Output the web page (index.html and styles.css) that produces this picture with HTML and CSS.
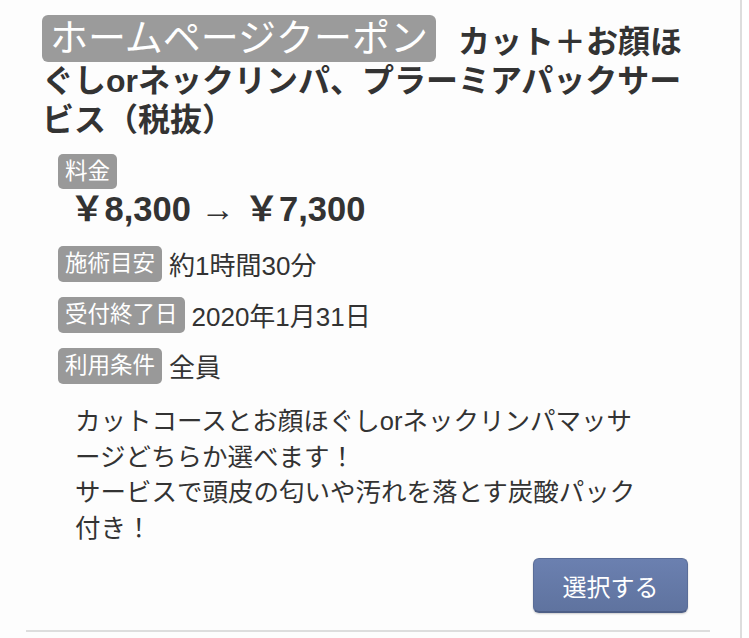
FILE: index.html
```html
<!DOCTYPE html>
<html lang="ja">
  <head>
    <meta charset="UTF-8" />
    <meta name="viewport" content="width=device-width, initial-scale=1.0" />
    <title>クーポン</title>
    <link rel="stylesheet" href="styles.css">
  </head>
  <body>
    <div id="page">
      <div class="coupon">
        <h2 class="coupon-title">
          <span class="coupon-type">ホームページクーポン</span>カット＋お顔ほぐしorネックリンパ、プラーミアパックサービス（税抜）
        </h2>

        <div class="info">
          <div class="price-row">
            <span class="label">料金</span>
            <div class="price">￥8,300 → ￥7,300</div>
          </div>
          <div class="row">
            <span class="label">施術目安</span>
            <span class="value">約1時間30分</span>
          </div>
          <div class="row">
            <span class="label">受付終了日</span>
            <span class="value">2020年1月31日</span>
          </div>
          <div class="row">
            <span class="label">利用条件</span>
            <span class="value">全員</span>
          </div>

          <p class="desc">
            カットコースとお顔ほぐしorネックリンパマッサージどちらか選べます！<br />
            サービスで頭皮の匂いや汚れを落とす炭酸パック付き！
          </p>
        </div>

        <div class="actions">
          <button class="select-btn">選択する</button>
        </div>
      </div>
    </div>
  </body>
</html>
```

FILE: styles.css
```css
body {
  margin: 0;
  background-color: #fff;
  font-family: "Liberation Sans", "Noto Sans CJK JP", sans-serif;
  color: #333;
}

#page {
  width: 740px;
  min-height: 638px;
  background-color: #fdfdfd;
  border-right: 2px solid #ddd;
}

.coupon {
  margin-left: 26px;
  width: 684px;
  box-sizing: border-box;
  padding: 15px 10px 17px 16px;
  border-bottom: 2px solid #ddd;
}

.coupon-title {
  margin: 0;
  font-size: 32px;
  line-height: 38.5px;
  font-weight: bold;
  color: #333;
}

.coupon-type {
  display: inline-block;
  vertical-align: 2px;
  margin-right: 22px;
  padding: 0 8px;
  font-size: 38px;
  line-height: 47px;
  font-weight: normal;
  color: #fff;
  background-color: #9b9b9b;
  border-radius: 6px;
}

.info {
  margin: 15px 0 0 16px;
}

.label {
  display: inline-block;
  height: 36px;
  line-height: 36px;
  padding: 0 7px;
  font-size: 22.5px;
  color: #fff;
  background-color: #999;
  border-radius: 5px;
}

.price-row .label {
  height: 35px;
  line-height: 35px;
}

.price {
  margin-left: 12px;
  font-size: 34.5px;
  line-height: 40px;
  font-weight: bold;
  color: #333;
}

.row {
  display: flex;
  align-items: center;
  gap: 7px;
  margin-top: 14px;
}

.price-row + .row {
  margin-top: 16px;
}

.value {
  font-size: 26px;
  color: #333;
}

.desc {
  margin: 20px 0 0 17px;
  width: 575px;
  font-size: 25.5px;
  line-height: 35.5px;
  color: #333;
}

.actions {
  display: flex;
  justify-content: flex-end;
  margin: 12px 12px 0 0;
}

.select-btn {
  width: 155px;
  height: 55px;
  font-family: inherit;
  font-size: 24px;
  color: #fff;
  background: linear-gradient(#6b80b0, #5f739f);
  border: 1px solid #5a6d98;
  border-bottom: 2px solid #4e5f86;
  border-radius: 6px;
  box-shadow: 0 1px 2px rgba(0, 0, 0, 0.2);
}
```
